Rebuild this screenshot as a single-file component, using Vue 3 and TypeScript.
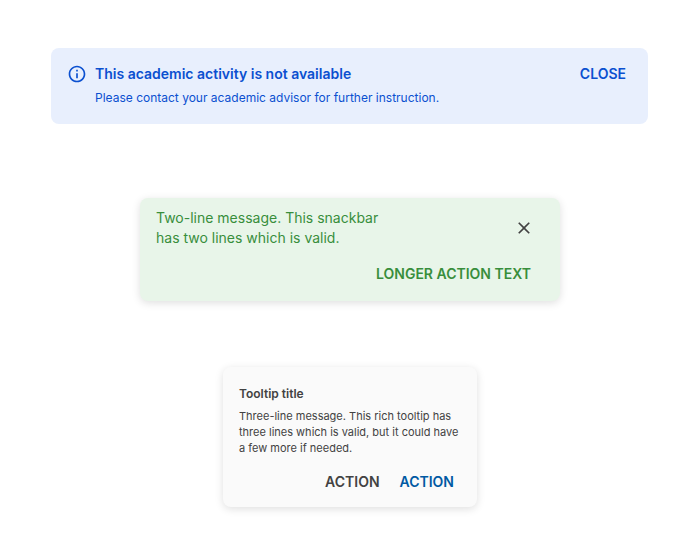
<script setup lang="ts">
const notice = {
  title: 'This academic activity is not available',
  text: 'Please contact your academic advisor for further instruction.',
}
const tooltipActions = [
  { label: 'ACTION', kind: 'neutral' },
  { label: 'ACTION', kind: 'primary' },
]
</script>

<template>
  <main class="page">
    <section class="banner" role="status">
      <svg class="info" viewBox="0 0 24 24" aria-hidden="true">
        <path d="M11 7h2v2h-2zm0 4h2v6h-2zm1-9C6.48 2 2 6.48 2 12s4.48 10 10 10 10-4.48 10-10S17.52 2 12 2zm0 18c-4.41 0-8-3.59-8-8s3.59-8 8-8 8 3.59 8 8-3.59 8-8 8z" />
      </svg>
      <div class="banner-body">
        <h2>{{ notice.title }}</h2>
        <p>{{ notice.text }}</p>
      </div>
      <button type="button" class="action">CLOSE</button>
    </section>

    <section class="snackbar" role="status">
      <div class="snackbar-top">
        <p>Two-line message. This snackbar has two lines which is valid.</p>
        <button type="button" class="dismiss" aria-label="Dismiss">
          <svg viewBox="0 0 24 24" aria-hidden="true">
            <path d="M19 6.41 17.59 5 12 10.59 6.41 5 5 6.41 10.59 12 5 17.59 6.41 19 12 13.41 17.59 19 19 17.59 13.41 12z" />
          </svg>
        </button>
      </div>
      <button type="button" class="action">LONGER ACTION TEXT</button>
    </section>

    <section class="tooltip" role="tooltip">
      <h3>Tooltip title</h3>
      <p>Three-line message. This rich tooltip has three lines which is valid, but it could have a few more if needed.</p>
      <div class="tooltip-actions">
        <button v-for="a in tooltipActions" :key="a.kind" type="button" class="action" :class="a.kind">{{ a.label }}</button>
      </div>
    </section>
  </main>
</template>

<style>
body {
  margin: 0;
  background: #fff;
}
</style>

<style scoped>
.page {
  display: flex;
  flex-direction: column;
  align-items: center;
  padding: 48px 0 50px;
  font-family: Inter, "Liberation Sans", sans-serif;
}
h2,
h3,
p {
  margin: 0;
}
svg {
  display: block;
  fill: currentColor;
}
.action {
  border: 0;
  padding: 0;
  background: none;
  color: inherit;
  font: 600 14px/20px Inter, "Liberation Sans", sans-serif;
  cursor: pointer;
}
.banner {
  box-sizing: border-box;
  align-self: stretch;
  margin: 0 52px 0 51px;
  display: flex;
  align-items: flex-start;
  gap: 8px;
  padding: 16px 22px 16px 16px;
  border-radius: 8px;
  background: #e8effd;
  color: #0b50d0;
}
.info {
  flex: none;
  width: 20px;
  height: 20px;
}
.banner-body {
  flex: 1;
}
.banner h2 {
  font-size: 14px;
  line-height: 20px;
  font-weight: 600;
}
.banner p {
  margin-top: 4px;
  font-size: 12px;
  line-height: 20px;
}
.snackbar {
  box-sizing: border-box;
  width: 100%;
  max-width: 420px;
  margin-top: 74px;
  padding: 10px 29px 17px 16px;
  display: flex;
  flex-direction: column;
  align-items: flex-end;
  gap: 16px;
  border-radius: 8px;
  background: #e8f5e9;
  color: #388e3c;
  box-shadow: 0 2px 8px rgba(0, 0, 0, 0.13);
}
.snackbar-top {
  align-self: stretch;
  display: flex;
  align-items: center;
  justify-content: space-between;
}
.snackbar p {
  max-width: 240px;
  font-size: 14px;
  line-height: 20px;
}
.dismiss {
  width: 20px;
  height: 20px;
  margin-right: -3px;
  border: 0;
  padding: 0;
  background: none;
  color: #424242;
  cursor: pointer;
}
.tooltip {
  box-sizing: border-box;
  width: 100%;
  max-width: 254px;
  margin-top: 66px;
  padding: 17px 16px 15px;
  border-radius: 8px;
  background: #fafafa;
  color: #424242;
  box-shadow: 0 2px 8px rgba(0, 0, 0, 0.13);
}
.tooltip h3 {
  font-size: 12px;
  line-height: 20px;
  font-weight: 600;
}
.tooltip p {
  margin-top: 4px;
  font-size: 11px;
  line-height: 16px;
}
.tooltip-actions {
  display: flex;
  justify-content: flex-end;
  gap: 20px;
  margin-top: 16px;
  padding-right: 7px;
}
.primary {
  color: #0059a3;
}
</style>
